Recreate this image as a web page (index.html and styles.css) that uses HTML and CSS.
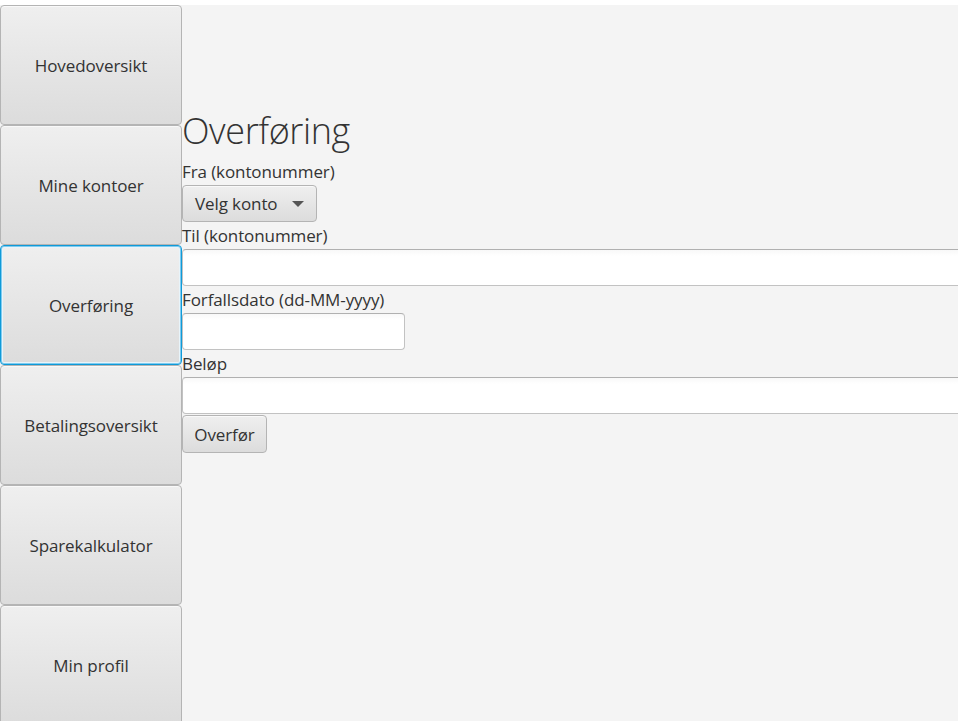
FILE: index.html
```html
<!DOCTYPE html>
<html lang="no">
<head>
<meta charset="utf-8">
<title>Overføring</title>
<link rel="stylesheet" href="styles.css">
</head>
<body>
<div class="window">
  <nav class="sidebar">
    <button class="nav-btn">Hovedoversikt</button>
    <button class="nav-btn">Mine kontoer</button>
    <button class="nav-btn focused">Overføring</button>
    <button class="nav-btn">Betalingsoversikt</button>
    <button class="nav-btn">Sparekalkulator</button>
    <button class="nav-btn">Min profil</button>
  </nav>
  <main class="content">
    <h1 class="title">Overføring</h1>
    <label class="field-label">Fra (kontonummer)</label>
    <div class="combo"><span>Velg konto</span><span class="arrow"></span></div>
    <label class="field-label">Til (kontonummer)</label>
    <input class="text-field wide" type="text">
    <label class="field-label">Forfallsdato (dd-MM-yyyy)</label>
    <input class="text-field short" type="text">
    <label class="field-label">Beløp</label>
    <input class="text-field wide" type="text">
    <button class="action-btn">Overfør</button>
  </main>
</div>
</body>
</html>
```

FILE: styles.css
```css
html, body {
  margin: 0;
  padding: 0;
  background: #ffffff;
  overflow: hidden;
  height: 721px;
}
body {
  font-family: "Open Sans", "Noto Sans", sans-serif;
  color: #333333;
}
.window {
  margin-top: 5px;
  display: flex;
  background: #f4f4f4;
  height: 716px;
  width: 958px;
  overflow: hidden;
}
.sidebar {
  flex: 0 0 182px;
  display: flex;
  flex-direction: column;
}
.nav-btn {
  flex: 0 0 120px;
  height: 120px;
  width: 182px;
  margin: 0;
  box-sizing: border-box;
  border: 1px solid #b4b4b4;
  border-radius: 4px;
  background: linear-gradient(#efefef, #dcdcdc);
  box-shadow: inset 0 1px 0 #f9f9f9;
  font-family: inherit;
  font-size: 17px;
  letter-spacing: -0.1px;
  color: #333333;
  padding: 0;
  cursor: default;
}
.nav-btn.focused {
  border: 1px solid #0f9ad8;
  box-shadow: inset 0 0 0 1px #7fcbef, inset 0 0 0 2px #e8f4fa;
}
.content {
  flex: 1 1 auto;
  display: flex;
  flex-direction: column;
  align-items: flex-start;
  padding-top: 100px;
  min-width: 0;
}
.title {
  margin: 0;
  font-weight: 300;
  font-size: 36px;
  line-height: 52px;
  height: 52px;
  color: #333333;
  letter-spacing: -0.4px;
}
.field-label {
  display: flex;
  align-items: flex-end;
  box-sizing: border-box;
  height: 27px;
  padding-bottom: 2px;
  line-height: 22px;
  font-size: 17px;
  letter-spacing: -0.1px;
  color: #333333;
}
.title + .field-label {
  height: 28px;
}
.combo {
  box-sizing: border-box;
  width: 135px;
  height: 37px;
  display: flex;
  align-items: center;
  justify-content: space-between;
  padding: 0 12px 0 12px;
  border: 1px solid #b4b4b4;
  border-radius: 4px;
  background: linear-gradient(#efefef, #dcdcdc);
  box-shadow: inset 0 1px 0 #f9f9f9;
  font-size: 17px;
  letter-spacing: -0.1px;
  color: #333333;
}
.arrow {
  width: 0;
  height: 0;
  border-left: 6px solid transparent;
  border-right: 6px solid transparent;
  border-top: 6px solid #555555;
  margin-top: 1px;
}
.text-field {
  box-sizing: border-box;
  height: 37px;
  margin: 0;
  border: 1px solid #c2c2c2;
  border-top-color: #b0b0b0;
  border-radius: 4px;
  background: linear-gradient(#f8f8f8 0, #ffffff 6px);
  font-family: inherit;
  font-size: 17px;
  padding: 0 8px;
  outline: none;
}
.text-field.wide {
  width: 800px;
}
.text-field.short {
  width: 223px;
}
.action-btn {
  margin-top: 1px;
  box-sizing: border-box;
  width: 85px;
  height: 38px;
  border: 1px solid #b4b4b4;
  border-radius: 4px;
  background: linear-gradient(#efefef, #dcdcdc);
  box-shadow: inset 0 1px 0 #f9f9f9;
  font-family: inherit;
  font-size: 17px;
  letter-spacing: -0.1px;
  color: #333333;
  padding: 0;
}
```
